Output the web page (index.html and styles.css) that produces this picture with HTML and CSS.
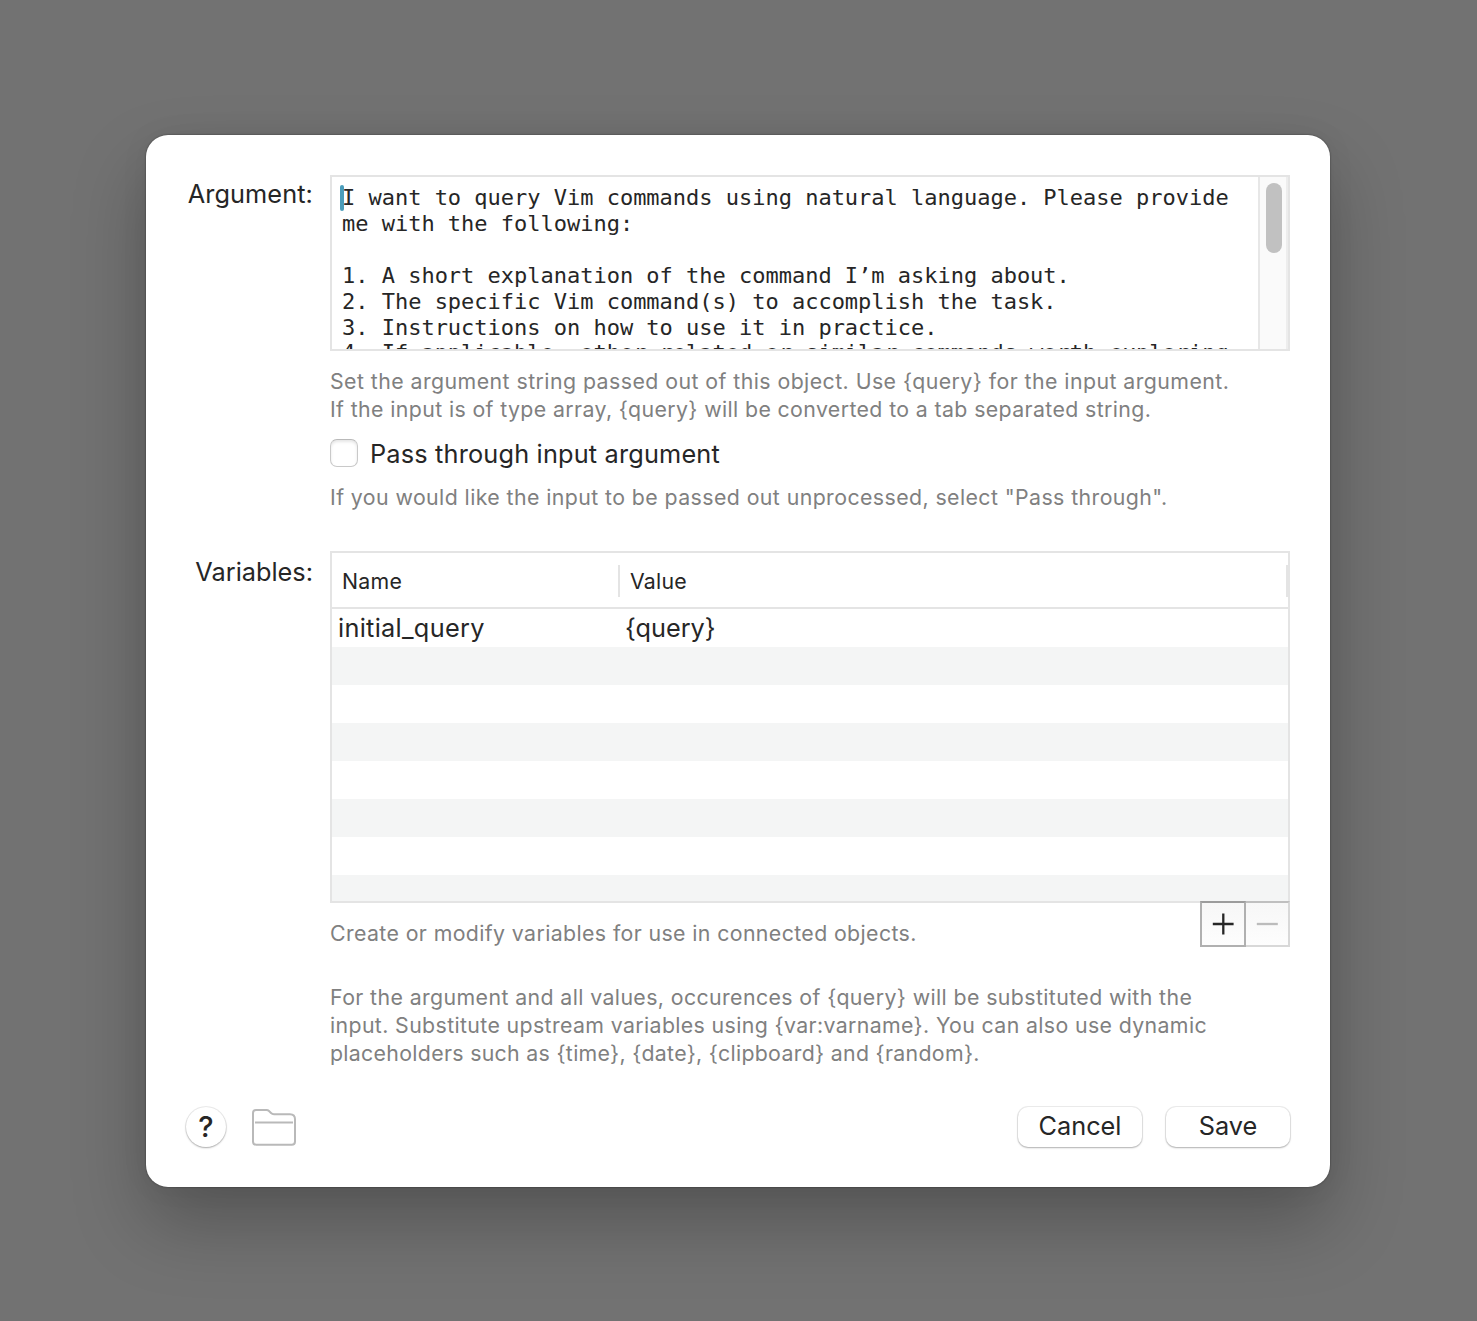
FILE: index.html
```html
<!DOCTYPE html>
<html lang="en">
<head>
<meta charset="utf-8">
<title>Arg and Vars</title>
<link rel="stylesheet" href="styles.css">
</head>
<body>
<main class="dialog">
  <section class="row">
    <div class="label label-argument">Argument:</div>
    <div class="field">
      <div class="editor">
        <div class="editor-text"><span class="caret"></span>I want to query Vim commands using natural language. Please provide
me with the following:

1. A short explanation of the command I’m asking about.
2. The specific Vim command(s) to accomplish the task.
3. Instructions on how to use it in practice.
<span class="partial">4. If applicable, other related or similar commands worth exploring</span></div>
        <div class="scroll-track"><div class="scroll-thumb"></div></div>
      </div>
      <p class="hint hint-argument"><span class="l1">Set the argument string passed out of this object. Use {query} for the input argument.</span><br><span class="l2">If the input is of type array, {query} will be converted to a tab separated string.</span></p>
      <label class="check"><span class="box"></span><span class="check-text">Pass through input argument</span></label>
      <p class="hint hint-pass"><span class="l3">If you would like the input to be passed out unprocessed, select "Pass through".</span></p>
    </div>
  </section>
  <section class="row row-variables">
    <div class="label label-variables">Variables:</div>
    <div class="field">
      <div class="table">
        <div class="thead"><div class="th th-name">Name</div><div class="th th-value">Value</div></div>
        <div class="tbody">
          <div class="tr"><div class="td td-name">initial_query</div><div class="td td-value">{query}</div></div>
          <div class="tr"></div><div class="tr"></div><div class="tr"></div>
          <div class="tr"></div><div class="tr"></div><div class="tr"></div><div class="tr"></div>
        </div>
      </div>
      <div class="under-table">
        <p class="hint hint-create"><span class="l4">Create or modify variables for use in connected objects.</span></p>
        <div class="segments">
          <button class="seg seg-add" aria-label="Add"><svg width="22" height="22" viewBox="0 0 22 22"><path d="M11.300 .6v20.800M.8 11h20.800" stroke="#262626" stroke-width="2.300"/></svg></button>
          <button class="seg seg-remove" aria-label="Remove"><svg width="22" height="22" viewBox="0 0 22 22"><path d="M.8 11h21" stroke="#bcbcbc" stroke-width="2.300"/></svg></button>
        </div>
      </div>
      <p class="hint hint-values"><span class="l5">For the argument and all values, occurences of {query} will be substituted with the</span><br><span class="l6">input. Substitute upstream variables using {var:varname}. You can also use dynamic</span><br><span class="l7">placeholders such as {time}, {date}, {clipboard} and {random}.</span></p>
    </div>
  </section>
  <footer class="footer">
    <button class="help" aria-label="Help">?</button>
    <svg class="folder" width="44" height="37" viewBox="0 0 44 37" fill="none" stroke="#b9b9b9" stroke-width="2"><path d="M1 32.500V4Q1 1 4 1H14.500Q16 1 17 2L19 4Q20.200 5.200 22 5.200H38Q43 5.200 43 10.200V32.500Q43 35.800 39.700 35.800H4.300Q1 35.800 1 32.500Z"/><path d="M3 13.600H41"/></svg>
    <button class="btn btn-cancel">Cancel</button>
    <button class="btn btn-save">Save</button>
  </footer>
</main>
</body>
</html>
```
FILE: styles.css
```css
* { box-sizing: border-box; }
body {
  margin: 0;
  height: 1321px;
  overflow: hidden;
  padding: 135px 147px 134px 146px;
  background: #727272;
  font-family: Inter, "Liberation Sans", sans-serif;
  color: #262626;
}
p { margin: 0; }
button { font: inherit; color: inherit; padding: 0; }
.dialog {
  display: flex;
  flex-direction: column;
  height: 1052px;
  padding: 40px 39px 0;
  border-radius: 22px;
  background: #fff;
  box-shadow: 0 0 2px rgba(0,0,0,.5), 0 0 30px rgba(0,0,0,.05), 0 36px 72px rgba(0,0,0,.25);
}
.row { display: flex; padding-right: 1px; }
.row-variables { margin-top: 40px; }
.label {
  width: 145px;
  padding-right: 17px;
  text-align: right;
  font-size: 25.3px;
  line-height: 32px;
  white-space: nowrap;
  flex: none;
}
.label-argument { padding-top: 3px; letter-spacing: .1px; }
.label-variables { padding-top: 5px; }
.field { flex: 1; min-width: 0; }
.editor {
  display: flex;
  height: 176px;
  border: 2px solid #e4e4e4;
  overflow: hidden;
}
.editor-text {
  position: relative;
  flex: 1;
  padding: 8px 0 0 10px;
  font: 22px/26px "DejaVu Sans Mono", monospace;
  letter-spacing: -.012px;
  white-space: pre;
}
.partial { position: relative; top: -1px; }
.caret {
  position: absolute;
  left: 8px;
  top: 8px;
  width: 4px;
  height: 26px;
  border-radius: 2px;
  background: #4b9dbb;
}
.scroll-track {
  width: 30px;
  padding: 6px 0 0 6px;
  border-left: 2px solid #e7e7e7;
  border-right: 2px solid #ededed;
  background: #fafafa;
}
.scroll-thumb { width: 16px; height: 70px; border-radius: 8px; background: #c1c1c1; }
.hint {
  font-size: 21.3px;
  line-height: 28px;
  color: #808080;
  white-space: nowrap;
}
.l1 { letter-spacing: .445px; }
.l2 { letter-spacing: .385px; }
.l3 { letter-spacing: .42px; }
.l4 { letter-spacing: .39px; }
.l5 { letter-spacing: .4px; }
.l6 { letter-spacing: .375px; }
.l7 { letter-spacing: .32px; }
.hint-argument { margin-top: 16px; }
.check { display: flex; align-items: center; height: 28px; margin-top: 16px; }
.box {
  width: 28px;
  height: 28px;
  margin-right: 12px;
  border: 1px solid #c9c9c9;
  border-top-color: #b9b9b9;
  border-radius: 7px;
  box-shadow: inset 0 2px 3px rgba(0,0,0,.1);
}
.check-text { padding-top: 2px; font-size: 25.3px; line-height: 28px; letter-spacing: .18px; white-space: nowrap; }
.hint-pass { margin-top: 16px; }
.table { height: 352px; border: 2px solid #e4e4e4; overflow: hidden; }
.thead {
  display: flex;
  align-items: center;
  height: 56px;
  border-bottom: 2px solid #e4e4e4;
  font-size: 21.3px;
  letter-spacing: .25px;
}
.th { height: 32px; line-height: 32px; padding-left: 10px; border-right: 2px solid #e4e4e4; margin-top: 2px; }
.th-name { width: 288px; }
.th-value { flex: 1; }
.tr { display: flex; height: 38px; line-height: 38px; font-size: 25.3px; }
.tr:nth-child(even) { background: #f4f5f5; }
.td { padding-left: 6px; white-space: nowrap; }
.td-name { width: 287px; letter-spacing: .3px; }
.under-table { display: flex; justify-content: space-between; }
.hint-create { margin-top: 16px; }
.segments { display: flex; margin-top: -2px; position: relative; }
.seg {
  display: flex;
  align-items: center;
  justify-content: center;
  height: 46px;
  border: 2px solid #b0b0b0;
  border-radius: 0;
  background: linear-gradient(#f7f7f7, #fdfdfd);
}
.seg-add { width: 46px; border-top-color: #9c9c9c; }
.seg-remove { width: 44px; border-color: #bfbfbf #d8d8d8 #d8d8d8; border-left: 0; }
.hint-values { margin-top: 36px; }
.footer { display: flex; align-items: center; margin-top: 39px; height: 42px; padding: 0 1px; }
.help {
  width: 40px;
  height: 40px;
  border: 0;
  border-radius: 50%;
  background: #fff;
  box-shadow: 0 0 0 1px rgba(0,0,0,.07), 0 1px 2px rgba(0,0,0,.28);
  font-size: 29px;
  line-height: 40px;
  font-weight: 500;
}
.folder { margin: 0 auto 0 26px; }
.btn {
  height: 40px;
  width: 124px;
  padding-bottom: 2px;
  border: 0;
  border-radius: 10px;
  background: #fff;
  box-shadow: 0 0 0 1px rgba(0,0,0,.07), 0 1px 2px rgba(0,0,0,.26);
  font-size: 25.3px;
  line-height: 38px;
}
.btn-save { margin-left: 24px; }
```
